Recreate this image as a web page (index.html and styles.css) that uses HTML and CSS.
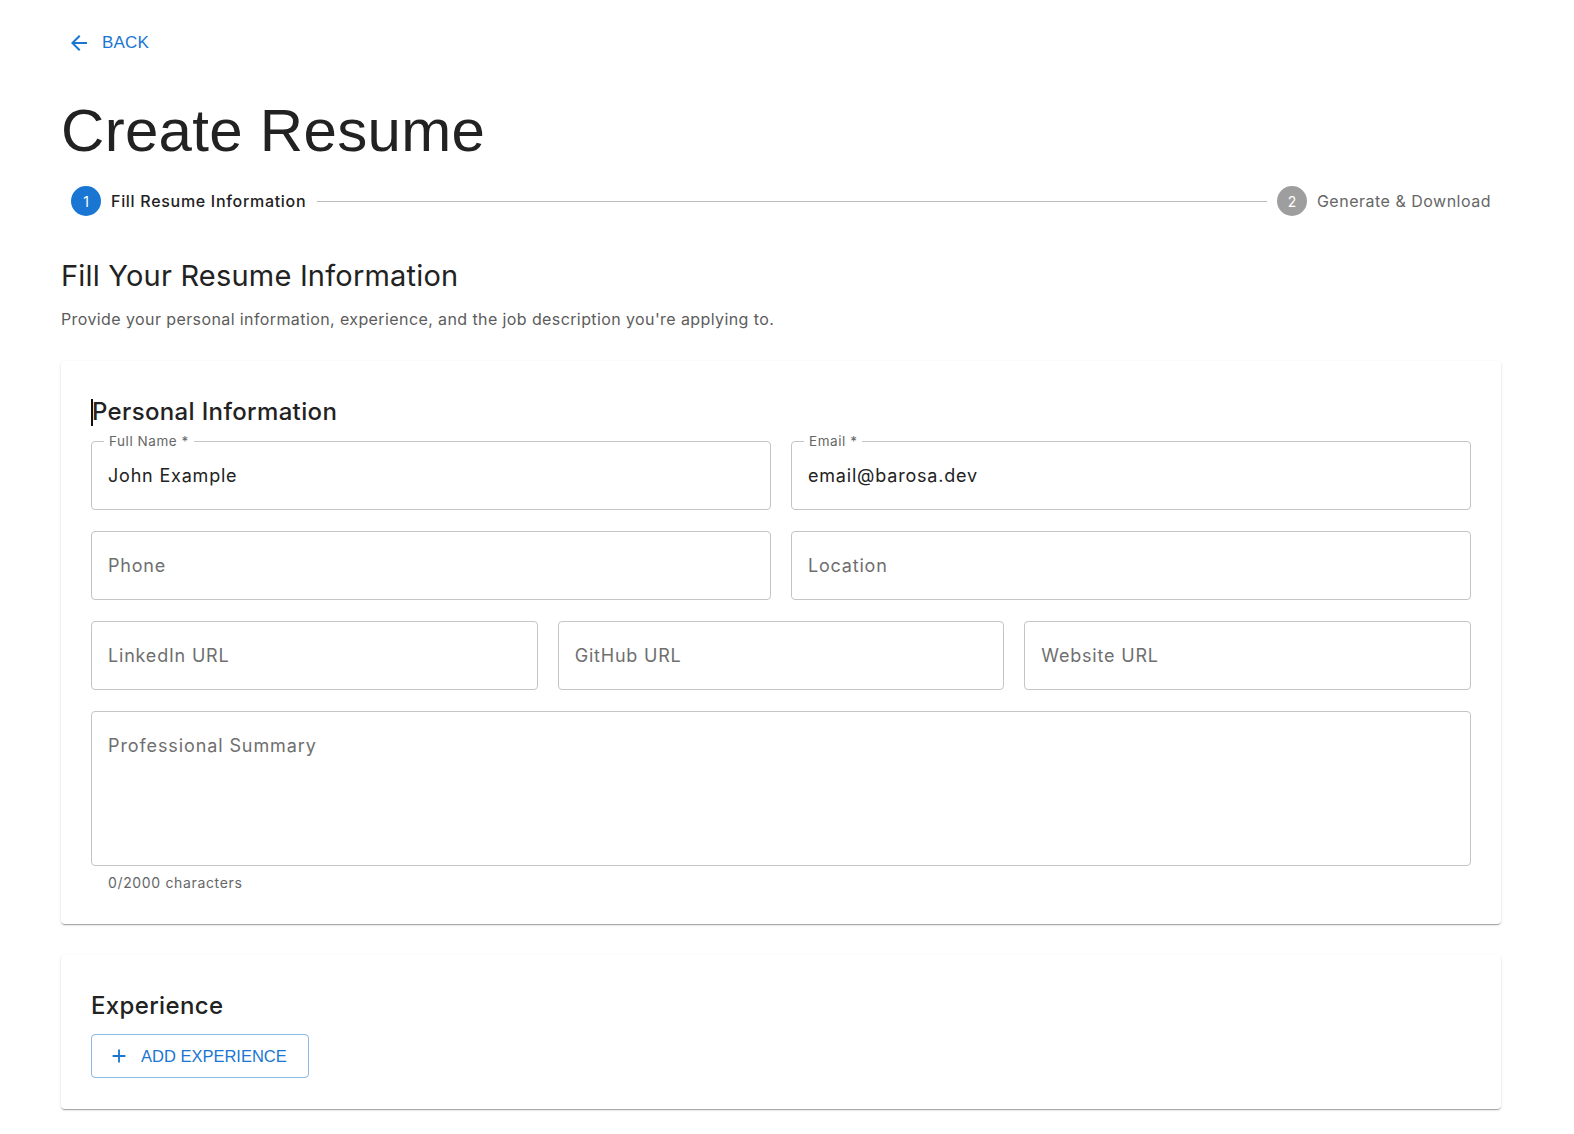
FILE: index.html
```html
<!DOCTYPE html>
<html lang="en">
<head>
<meta charset="utf-8">
<title>Create Resume</title>
<link rel="stylesheet" href="styles.css">
</head>
<body>
<div class="page">
  <a class="back-btn" href="#">
    <svg class="back-icon" viewBox="0 0 24 24" width="22" height="22" aria-hidden="true"><path d="M20 11H7.83l5.59-5.59L12 4l-8 8 8 8 1.41-1.41L7.83 13H20v-2z" fill="currentColor"/></svg>
    <span>BACK</span>
  </a>

  <h1 class="title">Create Resume</h1>

  <div class="stepper">
    <div class="step">
      <span class="step-icon active">1</span>
      <span class="step-label active">Fill Resume Information</span>
    </div>
    <div class="step-line"></div>
    <div class="step">
      <span class="step-icon">2</span>
      <span class="step-label">Generate &amp; Download</span>
    </div>
  </div>

  <h2 class="section-title">Fill Your Resume Information</h2>
  <p class="section-sub">Provide your personal information, experience, and the job description you're applying to.</p>

  <section class="card">
    <h3 class="card-title"><span class="caret"></span>Personal Information</h3>
    <div class="grid grid-2">
      <div class="field">
        <span class="field-label">Full Name *</span>
        <span class="field-value">John Example</span>
      </div>
      <div class="field">
        <span class="field-label">Email *</span>
        <span class="field-value">email@barosa.dev</span>
      </div>
    </div>
    <div class="grid grid-2">
      <div class="field"><span class="field-placeholder">Phone</span></div>
      <div class="field"><span class="field-placeholder">Location</span></div>
    </div>
    <div class="grid grid-3">
      <div class="field"><span class="field-placeholder">LinkedIn URL</span></div>
      <div class="field"><span class="field-placeholder">GitHub URL</span></div>
      <div class="field"><span class="field-placeholder">Website URL</span></div>
    </div>
    <div class="field field-multi"><span class="field-placeholder">Professional Summary</span></div>
    <div class="helper">0/2000 characters</div>
  </section>

  <section class="card card-exp">
    <h3 class="card-title">Experience</h3>
    <a class="outline-btn" href="#">
      <svg viewBox="0 0 24 24" width="22" height="22" aria-hidden="true"><path d="M19 13h-6v6h-2v-6H5v-2h6V5h2v6h6v2z" fill="currentColor"/></svg>
      <span>ADD EXPERIENCE</span>
    </a>
  </section>
</div>
</body>
</html>
```

FILE: styles.css
```css
* { box-sizing: border-box; }

html, body {
  margin: 0;
  padding: 0;
  background: #ffffff;
}

body {
  font-family: Inter, "Noto Sans", "DejaVu Sans", sans-serif;
  color: #222222;
}

.page {
  padding: 0 73px 12px 61px;
}

.back-btn {
  display: inline-flex;
  align-items: center;
  height: 36px;
  margin-top: 25px;
  padding: 0 8px 0 6px;
  color: #1976d2;
  text-decoration: none;
  font-family: "Liberation Sans", Arial, sans-serif;
  font-size: 17px;
  letter-spacing: 0.01em;
}

.back-icon {
  margin-right: 11px;
  width: 24px;
  height: 24px;
}

.title {
  margin: 34px 0 0;
  font-family: "Liberation Sans", Arial, sans-serif;
  font-weight: 400;
  font-size: 60px;
  line-height: 72px;
  color: #222222;
  letter-spacing: 0.3px;
}

.stepper {
  display: flex;
  align-items: center;
  height: 30px;
  margin-top: 19px;
  padding: 0 10px;
}

.step {
  display: flex;
  align-items: center;
}

.step-icon {
  width: 30px;
  height: 30px;
  border-radius: 50%;
  background: #9e9e9e;
  color: #ffffff;
  display: flex;
  align-items: center;
  justify-content: center;
  font-size: 14px;
}

.step-icon.active {
  background: #1976d2;
}

.step-label {
  margin-left: 10px;
  font-size: 16px;
  color: #666666;
  letter-spacing: 0.5px;
}

.step-label.active {
  color: #222222;
  font-weight: 500;
  letter-spacing: 0.7px;
}

.step-line {
  flex: 1;
  height: 1px;
  background: #bdbdbd;
  margin: 0 10px 0 11px;
}

.section-title {
  margin: 42px 0 0;
  font-size: 29px;
  line-height: 35px;
  font-weight: 400;
  color: #222222;
  letter-spacing: 0.2px;
}

.section-sub {
  margin: 14px 0 0;
  font-size: 16px;
  line-height: 24px;
  color: #5c5c5c;
  letter-spacing: 0.4px;
}

.card {
  margin-top: 30px;
  background: #ffffff;
  border-radius: 4px;
  padding: 30px 30px 31px;
  box-shadow: 0 2px 1px -1px rgba(0,0,0,0.2), 0 1px 1px 0 rgba(0,0,0,0.14), 0 1px 3px 0 rgba(0,0,0,0.12);
}

.card-exp {
  margin-top: 31px;
}

.card-title {
  margin: 5px 0 0;
  font-size: 24px;
  line-height: 32px;
  font-weight: 500;
  color: #222222;
  letter-spacing: 0.35px;
  display: flex;
  align-items: center;
}

.card-exp .card-title {
  margin-top: 5px;
}

.caret {
  display: inline-block;
  width: 2px;
  height: 27px;
  background: #111111;
  margin-right: -1px;
}

.grid {
  display: grid;
  gap: 20px;
  margin-bottom: 21px;
}

.card-title + .grid {
  margin-top: 13px;
}

.grid-2 { grid-template-columns: 1fr 1fr; }
.grid-3 { grid-template-columns: 1fr 1fr 1fr; }

.field {
  position: relative;
  height: 69px;
  border: 1px solid #c4c4c4;
  border-radius: 4px;
  display: flex;
  align-items: center;
  padding: 0 16px;
  font-size: 18px;
  letter-spacing: 0.8px;
}

.field-label {
  position: absolute;
  top: -10px;
  left: 12px;
  padding: 0 5px;
  background: #ffffff;
  font-size: 13.5px;
  line-height: 18px;
  color: #666666;
  letter-spacing: 0.55px;
}

.field-value {
  color: #222222;
}

.field-placeholder {
  color: #6f6f6f;
}

.field-multi {
  height: 155px;
  align-items: flex-start;
  padding-top: 23px;
  letter-spacing: 0.9px;
}

.helper {
  margin-top: 7px;
  padding-left: 17px;
  font-size: 14px;
  line-height: 20px;
  color: #666666;
  letter-spacing: 0.65px;
}

.outline-btn {
  display: inline-flex;
  align-items: center;
  height: 44px;
  margin-top: 12px;
  padding: 0 21px 0 16px;
  border: 1px solid rgba(25,118,210,0.5);
  border-radius: 4px;
  color: #1976d2;
  text-decoration: none;
  font-family: "Liberation Sans", Arial, sans-serif;
  font-size: 16.5px;
}

.outline-btn svg {
  margin-right: 11px;
}
```
